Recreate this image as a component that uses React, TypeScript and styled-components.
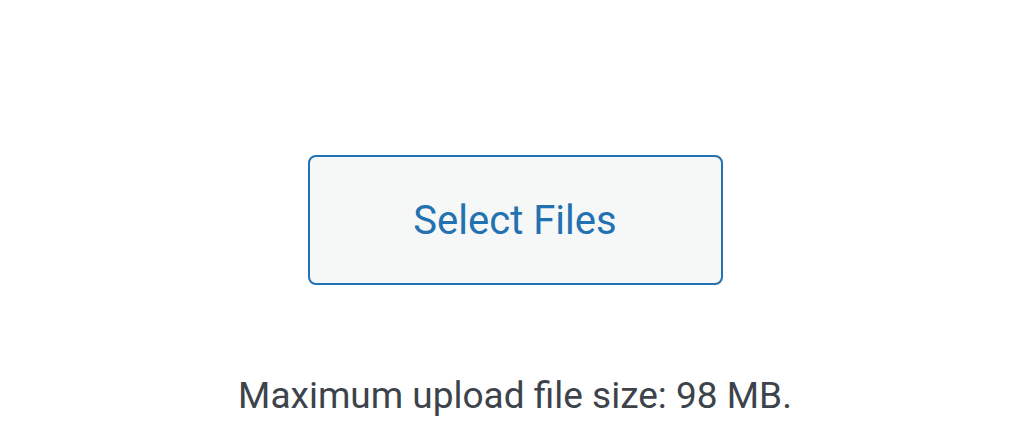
import React from 'react';
import styled, { createGlobalStyle } from 'styled-components';

const GlobalStyle = createGlobalStyle`
  html, body {
    margin: 0;
    padding: 0;
    background: #ffffff;
  }
  body {
    font-family: Roboto, "Liberation Sans", sans-serif;
  }
`;

const UploadArea = styled.div`
  width: 1030px;
  height: 438px;
  display: flex;
  flex-direction: column;
  align-items: center;
  padding-top: 155px;
  box-sizing: border-box;
`;

const SelectButton = styled.button`
  width: 415px;
  height: 130px;
  box-sizing: border-box;
  border: 2.5px solid #2271b1;
  border-radius: 8px;
  background: #f6f7f7;
  color: #2271b1;
  font-family: Roboto, "Liberation Sans", sans-serif;
  font-size: 40px;
  cursor: pointer;
  padding: 0;
`;

const MaxSize = styled.p`
  margin: 0;
  margin-top: 85px;
  color: #3c434a;
  font-size: 37px;
  line-height: 1.4;
`;

const App: React.FC = () => {
  return (
    <>
      <GlobalStyle />
      <UploadArea>
        <SelectButton type="button">Select Files</SelectButton>
        <MaxSize>Maximum upload file size: 98 MB.</MaxSize>
      </UploadArea>
    </>
  );
};

export default App;
